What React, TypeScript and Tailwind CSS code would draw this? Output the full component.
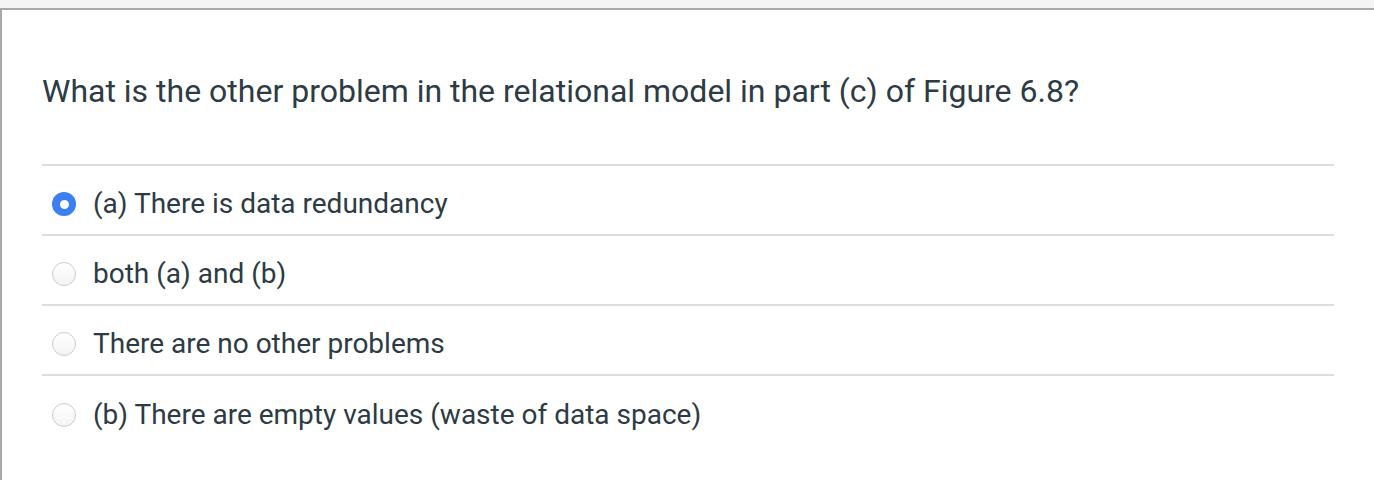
const answers = [
  { label: "(a) There is data redundancy", checked: true },
  { label: "both (a) and (b)", checked: false },
  { label: "There are no other problems", checked: false },
  { label: "(b) There are empty values (waste of data space)", checked: false },
];

function Radio({ checked }: { checked: boolean }) {
  if (checked) {
    return (
      <span className="flex h-[24px] w-[24px] shrink-0 items-center justify-center rounded-full bg-[#3b7ff2]">
        <span className="h-[9px] w-[9px] rounded-full bg-white" />
      </span>
    );
  }
  return (
    <span className="h-[24px] w-[24px] shrink-0 rounded-full border border-[#cccccc] bg-gradient-to-b from-white to-[#f3f3f3]" />
  );
}

export default function App() {
  return (
    <div className="h-[480px] w-[1374px] bg-[#f4f4f4] pt-[8px] font-['Roboto',sans-serif] text-[#2d3b45]">
      <div className="h-full border-l-2 border-t-2 border-[#a9a9a9] bg-white pl-[40px] pr-[40px]">
        <h2 className="pt-[61px] text-[32px] leading-[40px]">
          What is the other problem in the relational model in part (c) of Figure 6.8?
        </h2>
        <div className="mt-[53px] border-t-2 border-[#dddddd]">
          {answers.map((a, i) => (
            <label
              key={i}
              className={`flex h-[70px] items-center gap-[17px] pl-[10px] pt-[8px] ${i < answers.length - 1 ? "border-b-2 border-[#dddddd]" : ""}`}
            >
              <Radio checked={a.checked} />
              <span className="text-[28px] leading-[32px]">{a.label}</span>
            </label>
          ))}
        </div>
      </div>
    </div>
  );
}
